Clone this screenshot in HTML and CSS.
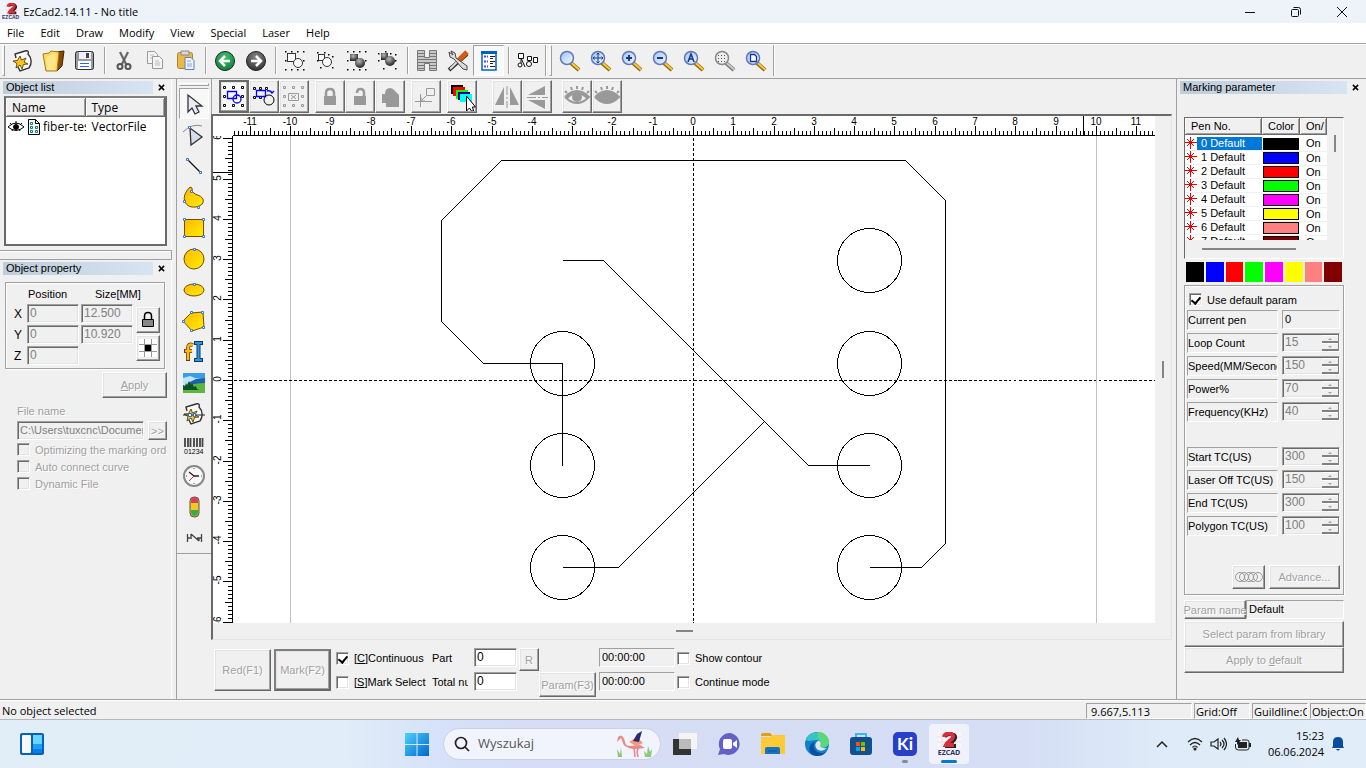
FILE: index.html
```html
<!DOCTYPE html>
<html lang="en">

<head>
    <meta charset="utf-8">
    <meta name="viewport" content="width=device-width, initial-scale=1">
    <title>EzCad2.14.11 - No title</title>
    <link rel="stylesheet" href="styles.css">
</head>

<body>
    <!-- shared icon parts -->
    <svg class="defs" width="0" height="0">
        <defs>
            <linearGradient id="gold" x1="0" y1="0" x2="1" y2="1"><stop offset="0" stop-color="#ffb800"/><stop offset="1" stop-color="#ffee00"/></linearGradient>
            <radialGradient id="ball" cx=".4" cy=".3" r=".7"><stop offset="0" stop-color="#bbb"/><stop offset="1" stop-color="#222"/></radialGradient>
            <radialGradient id="green" cx=".5" cy=".3" r=".7"><stop offset="0" stop-color="#3fc06e"/><stop offset="1" stop-color="#128040"/></radialGradient>
            <radialGradient id="dark" cx=".5" cy=".3" r=".7"><stop offset="0" stop-color="#888"/><stop offset="1" stop-color="#333"/></radialGradient>
            <linearGradient id="glass" x1="0" y1="0" x2="1" y2="1"><stop offset="0" stop-color="#9cc8f4"/><stop offset="1" stop-color="#f2f8ff"/></linearGradient>
            <linearGradient id="win" x1="0" y1="0" x2="1" y2="1"><stop offset="0" stop-color="#4fd0ff"/><stop offset="1" stop-color="#0067c8"/></linearGradient>
            <symbol id="dots" viewBox="0 0 24 24">
                <path d="M2 2h1.500v1.500H2zM8 2h1.500v1.500H8zM14 2h1.500v1.500h-1.500zM20 2h1.500v1.500h-1.500zM2 11h1.500v1.500H2zM20 11h1.500v1.500h-1.500zM2 20h1.500v1.500H2zM8 20h1.500v1.500H8zM14 20h1.500v1.500h-1.500zM20 20h1.500v1.500h-1.500z"/>
            </symbol>
            <symbol id="boxdots" viewBox="0 0 24 24">
                <path fill="none" stroke="currentColor" d="M1.500 1.500h2v2h-2zM10.500 1.500h2v2h-2zM19.500 1.500h2v2h-2zM1.500 10.500h2v2h-2zM19.500 10.500h2v2h-2zM1.500 19.500h2v2h-2zM10.500 19.500h2v2h-2zM19.500 19.500h2v2h-2z"/>
            </symbol>
            <symbol id="lens" viewBox="0 0 24 24">
                <path d="M13 14l8 7" stroke="#8a6a10" stroke-width="4"/>
                <path d="M13 13.500l8 7" stroke="#ffc83c" stroke-width="2"/>
                <circle cx="9" cy="9" r="6.500" fill="url(#glass)" stroke="#6576ba" stroke-width="1.500"/>
            </symbol>
            <symbol id="lensgray" viewBox="0 0 24 24">
                <path d="M13 14l8 7" stroke="#777" stroke-width="4"/>
                <path d="M13 13.500l8 7" stroke="#ccc" stroke-width="2"/>
                <circle cx="9" cy="9" r="6.500" fill="#eee" stroke="#888" stroke-width="1.500"/>
                <path d="M5 6.500h8M5 9.500h9M5 12.500h8" stroke="#555" stroke-dasharray="1 2"/>
            </symbol>
            <symbol id="star" viewBox="0 0 12 12">
                <path d="M5.500 0v12M0 5.500h12M2 2l7 7M9 2L2 9" stroke="#e80000" fill="none"/>
                <circle cx="5.500" cy="5.500" r="1.500" fill="#e80000"/>
            </symbol>
            <symbol id="close" viewBox="0 0 8 8">
                <path d="M1 1l6 6M7 1l-6 6" stroke="#000" stroke-width="1.700"/>
            </symbol>
            <symbol id="vector" viewBox="0 0 24 24">
                <path d="M5 9L4 5l10-3c3-1 4 1 3 3 4 4 4 10 1 14l-9 3-2-4" fill="#fafafa" stroke="#333" stroke-width="1.400"/>
                <path d="M9 7l1.500 4L15 9l-2 4 4 2-4.500.500L11 20l-2-4-4 3 1-4.500L2 12l4.500-.500z" fill="#ffc420" stroke="#443000" stroke-width=".8"/>
            </symbol>
            <symbol id="logo" viewBox="0 0 24 24">
                <path d="M0 0h24v24H0z" fill="#f8f6fa"/>
                <path d="M0 5h24M0 10h24M5 0v16M12 0v16M19 0v16" stroke="#e7dfe8"/>
                <path d="M8 5c1-4 11-4 10 1-.500 3-5 4-7 8h8" fill="none" stroke="#282028" stroke-width="4"/>
                <path d="M7 5c1-5 10-4 9 0-.500 3-5 4-7 8h8" fill="none" stroke="#d8303a" stroke-width="4"/>
            </symbol>
        </defs>
    </svg>

    <header class="titlebar">
        <span class="app-logo"><svg width="16" height="12" viewBox="3 0 17 17"><use href="#logo" width="24" height="24"/></svg><small>EZCAD</small></span>
        <h1>EzCad2.14.11 - No title</h1>
        <div class="win-buttons">
            <button aria-label="Minimize"><svg width="10" height="10"><path d="M0 5.500h10" stroke="#111"/></svg></button>
            <button aria-label="Restore"><svg width="10" height="10" fill="none" stroke="#111"><rect x=".500" y="2.500" width="7" height="7" rx="1"/><path d="M2.500.500h5q2 0 2 2v5"/></svg></button>
            <button aria-label="Close"><svg width="10" height="10"><path d="M0 0l10 10M10 0L0 10" stroke="#111"/></svg></button>
        </div>
    </header>

    <nav class="menubar">
        <a href="#">File</a><a href="#">Edit</a><a href="#">Draw</a><a href="#">Modify</a><a href="#">View</a><a href="#">Special</a><a href="#">Laser</a><a href="#">Help</a>
    </nav>

    <div class="toolbar">
        <i class="grip"></i>
        <button aria-label="New"><svg width="24" height="24"><use href="#vector"/></svg></button>
        <button aria-label="Open"><svg width="24" height="24"><path d="M14 3l8-1-2 15-5 5z" fill="#8a4a00" stroke="#3a2000"/><path d="M1 5l6-1 2-2 8 1-2 19H4z" fill="#ffd860" stroke="#a87818"/><path d="M4 8l10-4-1 17H5z" fill="#ffe68a"/></svg></button>
        <button aria-label="Save"><svg width="24" height="24"><rect x="2.500" y="2.500" width="18" height="18" rx="2" fill="#9a9a9a" stroke="#333"/><path d="M6 3h12v7H6z" fill="#eef"/><path d="M13 4h3v5h-3z" fill="#444"/><path d="M5 12h13v8H5z" fill="#fff"/><path d="M7 14.500h9M7 17.500h9" stroke="#2468e0"/></svg></button>
        <i class="sep"></i>
        <button aria-label="Cut"><svg width="24" height="24" fill="none" stroke="#555"><path d="M8 3l6 12M16 3l-6 12" stroke-width="2.500" stroke="#888"/><path d="M8 3l6 12M16 3l-6 12"/><circle cx="8" cy="17.500" r="2.500" stroke-width="2"/><circle cx="16" cy="17.500" r="2.500" stroke-width="2"/></svg></button>
        <button aria-label="Copy"><svg width="24" height="24" fill="#f4f4f4" stroke="#999"><path d="M4.500 2.500h7l3 3v9h-10z"/><path d="M9.500 7.500h7l3 3v9h-10z"/><path d="M7 6h4M7 9h2M12 12h4M12 14h5M12 16h5" stroke="#bbb"/></svg></button>
        <button aria-label="Paste"><svg width="24" height="24"><rect x="3.500" y="3.500" width="15" height="16" rx="2" fill="#ecb844" stroke="#ae8234"/><path d="M7 2h8v4H7z" fill="#d8d8d8" stroke="#888"/><path d="M11 8.500h6l3 3v9h-9z" fill="#eaf3ff" stroke="#6080c0"/><path d="M13 12h4M13 15h5M13 17h5" stroke="#88a8d8"/></svg></button>
        <i class="sep"></i>
        <button aria-label="Undo"><svg width="24" height="24"><circle cx="12" cy="12" r="9.500" fill="url(#green)" stroke="#222"/><path d="M17 12H7M12 7l-5 5 5 5" fill="none" stroke="#fff" stroke-width="2.500"/></svg></button>
        <button aria-label="Redo"><svg width="24" height="24"><circle cx="12" cy="12" r="9.500" fill="url(#dark)" stroke="#222"/><path d="M7 12h10M12 7l5 5-5 5" fill="none" stroke="#fff" stroke-width="2.500"/></svg></button>
        <i class="sep"></i>
        <button aria-label="Combine"><svg width="24" height="24"><use href="#dots"/><g fill="#fafafa" stroke="#333"><rect x="4.500" y="4.500" width="8" height="8"/><circle cx="15" cy="14" r="4.500"/></g></svg></button>
        <button aria-label="Uncombine"><svg width="24" height="24"><path d="M3 3h1.500v1.500H3zM10 3h1.500v1.500h-1.500zM3 11h1.500v1.500H3zM18 7h1.500v1.500h-1.500zM6 18h1.500v1.500H6zM18 18h1.500v1.500h-1.500zM14 5h1.500v1.500h-1.500z"/><g fill="#fafafa" stroke="#333"><rect x="4.500" y="5.500" width="6" height="6"/><circle cx="13" cy="13" r="4.500"/></g></svg></button>
        <button aria-label="Group"><svg width="24" height="24"><use href="#dots"/><g fill="url(#ball)"><rect x="5" y="5" width="8" height="7"/><circle cx="15" cy="14" r="5"/></g></svg></button>
        <button aria-label="Ungroup"><svg width="24" height="24"><path d="M2 4h1.500v1.500H2zM9 2h1.500v1.500H9zM2 11h1.500v1.500H2zM19 5h1.500v1.500h-1.500zM19 11h1.500v1.500h-1.500zM7 19h1.500v1.500H7zM19 19h1.500v1.500h-1.500zM14 4h1.500v1.500h-1.500z"/><g fill="url(#ball)"><rect x="5" y="4" width="7" height="7"/><circle cx="14" cy="12" r="5"/></g></svg></button>
        <i class="sep"></i>
        <button aria-label="Hatch"><svg width="24" height="24"><path d="M2.500 1.500h7v7h5v-7h7v20h-7v-7h-5v7h-7z" fill="#c8c8c8" stroke="#777"/><path d="M3 4.500h6M3 7.500h6M3 10.500h18M3 13.500h18M3 16.500h6M3 19.500h6M15 4.500h6M15 7.500h6M15 16.500h6M15 19.500h6" stroke="#777"/></svg></button>
        <button aria-label="System parameters"><svg width="24" height="24"><path d="M3 21L21 5" stroke="#333" stroke-width="4"/><path d="M12 12L21 3" stroke="#d85a10" stroke-width="5"/><path d="M4 20l8-8" stroke="#ddd" stroke-width="2"/><path d="M3 3l1 5 4 2 9 10 4 1v-4L10 9 9 4 5 2l2 4z" fill="#ddd" stroke="#444"/></svg></button>
        <button class="down" aria-label="Object list"><svg width="24" height="24"><path d="M5 3h14v18H5z" fill="#fff" stroke="#0060c8" stroke-width="1.500"/><path d="M4 2h16v3H4z" fill="#0060c8"/><path d="M13 7.500h5M13 9.500h3M13 12.500h5M13 14.500h3M13 17.500h5" stroke="#222"/><path d="M7 7.500h4M7 12.500h4M7 17.500h4" stroke="#44f" stroke-width="2" stroke-dasharray="2 1"/></svg></button>
        <i class="sep"></i>
        <button aria-label="Node list"><svg width="24" height="24" fill="#fff" stroke="#111"><path d="M5 9v8M5 9l4 9"/><path d="M2.500 4.500h5v5h-5zM11.500 7.500h4v4h-4zM17.500 8.500h4v5h-4z"/><circle cx="4" cy="16" r="2"/><circle cx="13" cy="15" r="2.500"/></svg></button>
        <i class="edge"></i>
        <i class="grip"></i>
        <button aria-label="Zoom window"><svg width="24" height="24"><use href="#lens"/></svg></button>
        <button aria-label="Zoom pan"><svg width="24" height="24"><use href="#lens"/><path d="M9 4v10M4 9h10M7.500 5.500L9 4l1.500 1.500M7.500 12.500L9 14l1.500-1.500M5.500 7.500L4 9l1.500 1.500M12.500 7.500L14 9l-1.500 1.500" fill="none" stroke="#183890"/></svg></button>
        <button aria-label="Zoom in"><svg width="24" height="24"><use href="#lens"/><path d="M9 6v6M6 9h6" stroke="#183890" stroke-width="2"/></svg></button>
        <button aria-label="Zoom out"><svg width="24" height="24"><use href="#lens"/><path d="M6 9h6" stroke="#183890" stroke-width="2"/></svg></button>
        <button aria-label="Zoom all"><svg width="24" height="24"><use href="#lens"/><path d="M6 13l3-8 3 8M7 10h4" fill="none" stroke="#183890" stroke-width="1.600"/></svg></button>
        <button aria-label="Zoom selection"><svg width="24" height="24"><use href="#lensgray"/></svg></button>
        <button aria-label="Zoom page"><svg width="24" height="24"><use href="#lens"/><path d="M6.500 5.500h4l2 2v5h-6z" fill="#fff" stroke="#183890" stroke-width="1.300"/></svg></button>
        <i class="edge"></i>
    </div>

    <main class="main">
        <aside class="left">
            <section class="panel list-panel">
                <div class="caption"><h2>Object list</h2><button aria-label="Close object list"><svg width="7" height="7"><use href="#close"/></svg></button></div>
                <div class="listbox">
                    <table class="objects">
                        <thead><tr><th>Name</th><th>Type</th></tr></thead>
                        <tbody><tr>
                            <td><svg width="16" height="12" viewBox="0 0 16 12" fill="none" stroke="#000"><path d="M0 6q8-8 16 0-8 7-16 0M2 2l2 2M8 0v3M14 2l-2 2M4 10l1-2M12 10l-1-2"/><circle cx="8" cy="6" r="2.500" fill="#000"/></svg><svg width="13" height="16" viewBox="0 0 13 16"><path d="M1.500.500h7l4 4v11h-11z" fill="#fff" stroke="#000"/><path d="M8.500.500v4h4" fill="none" stroke="#000"/><path d="M3.500 3.500h2v2h-2zM3.500 7.500h2v2h-2zM8.500 7.500h2v2h-2zM3.500 11.500h2v2h-2zM8.500 11.500h2v2h-2z" fill="none" stroke="#008080"/></svg><span>fiber-test</span></td>
                            <td>VectorFile</td>
                        </tr></tbody>
                    </table>
                </div>
            </section>
            <div class="splitter"></div>
            <section class="panel">
                <div class="caption"><h2>Object property</h2><button aria-label="Close object property"><svg width="7" height="7"><use href="#close"/></svg></button></div>
                <div class="position group">
                    <span></span><b>Position</b><b>Size[MM]</b>
                    <label for="px">X</label><input id="px" value="0" disabled><input aria-label="Width" value="12.500" disabled>
                    <label for="py">Y</label><input id="py" value="0" disabled><input aria-label="Height" value="10.920" disabled>
                    <label for="pz">Z</label><input id="pz" value="0" disabled>
                    <div class="side-buttons">
                        <button class="btn" aria-label="Lock ratio"><svg width="16" height="18" viewBox="0 0 16 18"><path d="M4.500 8V5q0-3.500 3.500-3.500t3.500 3.500v3" fill="none" stroke="#000" stroke-width="1.500"/><path d="M2.500 8.500h11v7h-11z" fill="#888" stroke="#000"/></svg></button>
                        <button class="btn" aria-label="Reference point"><svg width="18" height="18"><path d="M0 0h18v18H0z" fill="#999"/><path d="M0 0h5v5H0zM6 0h6v5H6zM13 0h5v5h-5zM0 6h5v6H0zM13 6h5v6h-5zM0 13h5v5H0zM6 13h6v5H6zM13 13h5v5h-5z" fill="#fff"/><path d="M6 6h6v6H6z"/></svg></button>
                    </div>
                </div>
                <button class="btn apply" disabled><u>A</u>pply</button>
                <div class="file">
                    <label for="fname">File name</label>
                    <div class="file-row"><input id="fname" value="C:\Users\tuxcnc\Documents" disabled><button class="btn" disabled>&gt;&gt;</button></div>
                    <label class="check"><input type="checkbox" disabled>Optimizing the marking order</label>
                    <label class="check"><input type="checkbox" disabled>Auto connect curve</label>
                    <label class="check"><input type="checkbox" disabled>Dynamic File</label>
                </div>
            </section>
        </aside>

        <div class="drawbar">
            <i class="hgrip"></i>
            <button class="down" aria-label="Pick"><svg width="24" height="24"><path d="M6 3v17l4-4 3 6 4-2-3-6h6z" fill="#e8eaf4" stroke="#333" stroke-width="1.300"/></svg></button>
            <button aria-label="Node edit"><svg width="24" height="24"><path d="M1 9Q10 0 20 3" fill="none" stroke="#888"/><path d="M8 5l1 17 11-8z" fill="#d8dcec" stroke="#333" stroke-width="1.300"/><path d="M6.500 3.500h2v2h-2z" fill="#fff" stroke="#3a78d8"/></svg></button>
            <button aria-label="Line"><svg width="24" height="24"><path d="M6 6l12 12" stroke="#111" stroke-width="1.200"/><path d="M4.500 4.500h2v2h-2zM17.500 17.500h2v2h-2z" fill="#fff" stroke="#3a78d8"/></svg></button>
            <button aria-label="Curve"><svg width="24" height="24"><path d="M8 2q-8 8-5 15 3 6 11 5 9-2 7-8-1-3-8-5-4-2-3-6z" fill="url(#gold)" stroke="#754c00"/><path d="M8.500 5.500h2v2h-2zM1.500 15.500h2v2h-2zM15.500 21.500h2v2h-2z" fill="#fff" stroke="#3a78d8"/></svg></button>
            <button aria-label="Rectangle"><svg width="24" height="24"><path d="M2.500 3.500h19v17h-19z" fill="url(#gold)" stroke="#754c00"/><path d="M1.500 2.500h2v2h-2zM20.500 2.500h2v2h-2zM1.500 19.500h2v2h-2zM20.500 19.500h2v2h-2z" fill="#fff" stroke="#3a78d8"/></svg></button>
            <button aria-label="Circle"><svg width="24" height="24"><circle cx="12" cy="12" r="10" fill="url(#gold)" stroke="#754c00"/><path d="M11.500 1.500h2v2h-2z" fill="#fff" stroke="#3a78d8"/></svg></button>
            <button aria-label="Ellipse"><svg width="24" height="24"><ellipse cx="12" cy="12" rx="10" ry="6" fill="url(#gold)" stroke="#754c00"/><path d="M11.500 5.500h2v2h-2z" fill="#fff" stroke="#3a78d8"/></svg></button>
            <button aria-label="Polygon"><svg width="24" height="24"><path d="M1 12l8-8 12-1 1 15-12 4z" fill="url(#gold)" stroke="#754c00"/><path d="M.500 11.500h2v2h-2zM8.500 2.500h2v2h-2zM19.500 2.500h2v2h-2zM20.500 17.500h2v2h-2zM8.500 20.500h2v2h-2z" fill="#fff" stroke="#3a78d8"/></svg></button>
            <button aria-label="Text"><svg width="24" height="24"><path d="M11 5c-5-2-5 2-5 5v11M2 11h8" fill="none" stroke="#5c3c00" stroke-width="4"/><path d="M11 5c-5-2-5 2-5 5v10M3 11h7" fill="none" stroke="#ffb820" stroke-width="2.500"/><path d="M12 3h9M12 20h9M16.500 3v17" stroke="#103860" stroke-width="4"/><path d="M13 3h7M13 20h7M16.500 3v17" stroke="#2a98e8" stroke-width="2"/></svg></button>
            <button aria-label="Bitmap"><svg width="24" height="24"><path d="M1 2h22v20H1z" fill="#bfe4fa"/><path d="M1 2h22v6L13 7 8 5 1 7z" fill="#3a9de8"/><path d="M6 12l8-4 9-1v7H6z" fill="#1a62b0"/><path d="M1 16q12-4 22-4v10H1z" fill="#5cb83c"/><path d="M1 17v-3l2 1 1-3 1 2 2-4 2 4 1-2 2 4 2-1 1 3 2 1H1z" fill="#0c5224"/></svg></button>
            <button aria-label="Vector file"><svg width="24" height="24"><use href="#vector"/><path d="M1 13h22" stroke="#223"/><path d="M6.500 11.500h3v3h-3zM11.500 11.500h2v3h-2z" fill="#fff" stroke="#1d6cd0"/></svg></button>
            <button aria-label="Barcode"><svg width="24" height="24"><path d="M3 5v9M6 5v9M8.500 5v9M12 5v9M15 5v9M18 5v9M20.500 5v9" stroke="#444" stroke-width="1.800"/><text x="2" y="21" class="tiny">01234</text></svg></button>
            <button aria-label="Delay"><svg width="24" height="24"><circle cx="12" cy="12" r="10" fill="#f8f8f8" stroke="#888" stroke-width="2"/><path d="M12 12L7 8M12 12h5" stroke="#222" stroke-width="1.300"/><path d="M12 12l-5 5" stroke="#e03030"/><path d="M12 4v1M12 19v1M4 12h1M19 12h1" stroke="#555"/></svg></button>
            <button aria-label="Input output"><svg width="24" height="24"><rect x="8" y="2" width="9" height="20" rx="4" fill="#f2c820" stroke="#555"/><path d="M9 8V6q0-4 3.500-4T16 6v2z" fill="#d8405a"/><path d="M9 15v2q0 4 3.500 4t3.500-4v-2z" fill="#3da84c"/></svg></button>
            <button aria-label="Encoder"><svg width="24" height="24" fill="none" stroke="#444" stroke-width="1.300"><path d="M5.500 8v8M19.500 8v8M5 12h5M15 12h5M9 8l8 7M9 8v3M17 15v-3"/></svg></button>
        </div>

        <div class="center">
            <div class="optbar">
                <button class="btn on" aria-label="Select mode"><svg width="24" height="24"><use href="#boxdots"/><g fill="none" stroke="#00f" stroke-width="1.300"><path d="M5.500 6.500h9v7h-9z"/><circle cx="15" cy="14" r="4"/></g></svg></button>
                <button class="btn" aria-label="Rotate mode"><svg width="24" height="24"><path fill="none" stroke="#000" d="M1.500 2.500h2v2h-2zM7.500 2.500h2v2h-2zM13.500 2.500h2v2h-2zM1.500 11.500h2v2h-2zM7.500 11.500h2v2h-2z"/><path d="M4.500 5.500h9v6h-9zM15 6q4-1 5 2l2-2M20 8l-2-2" fill="none" stroke="#00f" stroke-width="1.300"/><circle cx="17" cy="15" r="5" fill="none" stroke="#000"/></svg></button>
                <button class="btn off" aria-label="Clear selection"><svg width="24" height="24"><use href="#boxdots"/><path d="M6.500 8.500h10v7h-10zM9 10l5 4M14 10l-5 4" fill="none" stroke="#999"/></svg></button>
                <i></i>
                <button class="btn off" aria-label="Lock"><svg width="24" height="24"><path d="M8 11V8q0-4 4-4t4 4v3" fill="none" stroke="#999" stroke-width="2.500"/><path d="M6 11h12v9H6z" fill="#999"/></svg></button>
                <button class="btn off" aria-label="Unlock"><svg width="24" height="24"><path d="M9 8q0-4 3.500-4T16 8v3" fill="none" stroke="#999" stroke-width="2.500"/><path d="M6 11h12v9H6z" fill="#999"/></svg></button>
                <button class="btn off" aria-label="Unlock all"><svg width="24" height="24"><path d="M4 9h3q0-6 5-6 3 0 5 3l4 4v12H8v-4H4z" fill="#999"/></svg></button>
                <i></i>
                <button class="btn off" aria-label="Put to origin"><svg width="24" height="24" fill="none" stroke="#999"><path d="M12.500 3.500h8v7h-8zM1 16.500h17M6.500 9v13M12 11l-5 5M7 12v4h4"/></svg></button>
                <i></i>
                <button class="btn" aria-label="Pen order"><svg width="28" height="28" viewBox="0 0 28 28"><path d="M3 2h12v9H3z"/><path d="M5 4h12v9H5z" fill="red"/><path d="M8 7h12v9H8z" fill="#0f0"/><path d="M10 9h12v8H10z" fill="#000080"/><path d="M12 11h12v8H12z" fill="#0ff"/><path d="M18.500 13v15l3-3 2 3h2l-1-4h3z" fill="#fff" stroke="#000"/></svg></button>
                <i class="wide"></i>
                <button class="btn off" aria-label="Mirror horizontal"><svg width="26" height="24" fill="#999"><path d="M10 2v18H1zM16 2v18h9z"/><path d="M13 1v22" stroke="#999" stroke-dasharray="9 2 2 2"/></svg></button>
                <button class="btn off" aria-label="Mirror vertical"><svg width="24" height="24" fill="#999"><path d="M20 1v9H3zM20 15v9L3 15z"/><path d="M2 12.500h21" stroke="#999" stroke-dasharray="9 2 2 2"/></svg></button>
                <i class="mid"></i>
                <button class="btn off" aria-label="Show"><svg width="26" height="24" fill="none" stroke="#999" stroke-width="2"><path d="M1 12Q13 0 25 12 13 24 1 12M3 8L1 6M8 5L7 2M13 4V1M18 5l1-3M23 8l2-2M2 14q11-12 22 0"/><circle cx="13" cy="12" r="4" fill="#999"/></svg></button>
                <button class="btn off" aria-label="Hide"><svg width="26" height="24" fill="#999" stroke="#999" stroke-width="2"><path d="M1 12Q13 0 25 12 13 24 1 12M3 8L1 6M8 5L7 2M13 4V1M18 5l1-3M23 8l2-2"/></svg></button>
            </div>

            <div class="workspace">
                <span class="corner"></span>
                <svg class="ruler" id="rulerX"></svg>
                <span class="vscroll"></span>
                <svg class="ruler" id="rulerY"></svg>
                <svg class="canvas" id="canvas">
                    <g transform="translate(-.5 .5)" fill="none" stroke="#000" shape-rendering="crispEdges">
                        <path d="M-403-900v1800M403-900v1800" stroke="#c0c0c0"/>
                        <path d="M0-243v900M-460 0H900" stroke-dasharray="3 2"/>
                        <path d="M-131 85V-17H-210L-252-59V-160L-192-220H212L252-180V163L228 187H176"/>
                        <path d="M-131-120H-90L115 85H176M-131 187H-75L71 41"/>
                        <circle cx="-131" cy="-17" r="32"/>
                        <circle cx="-131" cy="85" r="32"/>
                        <circle cx="-131" cy="187" r="32"/>
                        <circle cx="176" cy="-120" r="32"/>
                        <circle cx="176" cy="-17" r="32"/>
                        <circle cx="176" cy="85" r="32"/>
                        <circle cx="176" cy="187" r="32"/>
                    </g>
                </svg>
                <span class="vscroll"><i></i></span>
                <span class="hscroll"><i></i></span>
            </div>

            <form class="markbar">
                <button class="btn big" type="button" disabled>Red(F1)</button>
                <button class="btn big thick" type="button" disabled>Mark(F2)</button>
                <div class="col checks">
                    <label class="check"><input type="checkbox" checked><span>[<u>C</u>]Continuous</span></label>
                    <label class="check"><input type="checkbox"><span>[<u>S</u>]Mark Select</span></label>
                </div>
                <div class="col names"><label for="part">Part</label><label for="total">Total num</label></div>
                <div class="col counts"><input id="part" value="0"><input id="total" value="0"></div>
                <button class="btn reset" type="button" disabled>R</button>
                <button class="btn param" type="button" disabled>Param(F3)</button>
                <div class="col times"><input aria-label="Part time" value="00:00:00" readonly><input aria-label="Total time" value="00:00:00" readonly></div>
                <div class="col checks">
                    <label class="check"><input type="checkbox">Show contour</label>
                    <label class="check"><input type="checkbox">Continue mode</label>
                </div>
            </form>
        </div>

        <aside class="right">
            <div class="caption"><h2>Marking parameter</h2><button aria-label="Close marking parameter"><svg width="7" height="7"><use href="#close"/></svg></button></div>
            <div class="penbox">
                <div class="pen-scroll">
                    <table class="pens">
                        <thead><tr><th>Pen No.</th><th>Color</th><th>On/</th></tr></thead>
                        <tbody>
                            <tr class="selected"><td><svg width="12" height="12"><use href="#star"/></svg><span>0 Default</span></td><td><i class="c0"></i></td><td>On</td></tr>
                            <tr><td><svg width="12" height="12"><use href="#star"/></svg><span>1 Default</span></td><td><i class="c1"></i></td><td>On</td></tr>
                            <tr><td><svg width="12" height="12"><use href="#star"/></svg><span>2 Default</span></td><td><i class="c2"></i></td><td>On</td></tr>
                            <tr><td><svg width="12" height="12"><use href="#star"/></svg><span>3 Default</span></td><td><i class="c3"></i></td><td>On</td></tr>
                            <tr><td><svg width="12" height="12"><use href="#star"/></svg><span>4 Default</span></td><td><i class="c4"></i></td><td>On</td></tr>
                            <tr><td><svg width="12" height="12"><use href="#star"/></svg><span>5 Default</span></td><td><i class="c5"></i></td><td>On</td></tr>
                            <tr><td><svg width="12" height="12"><use href="#star"/></svg><span>6 Default</span></td><td><i class="c6"></i></td><td>On</td></tr>
                            <tr><td><svg width="12" height="12"><use href="#star"/></svg><span>7 Default</span></td><td><i class="c7"></i></td><td>On</td></tr>
                        </tbody>
                    </table>
                </div>
                <span class="pen-v"></span>
                <span class="pen-h"></span>
            </div>
            <div class="palette"><i class="c0"></i><i class="c1"></i><i class="c2"></i><i class="c3"></i><i class="c4"></i><i class="c5"></i><i class="c6"></i><i class="c7"></i></div>

            <div class="params group">
                <label class="check"><input type="checkbox" checked>Use default param</label>
                <div class="row"><label for="pen">Current pen</label><input id="pen" class="plain" value="0" readonly></div>
                <div class="row"><label for="loop">Loop Count</label><span class="spin"><input id="loop" value="15" disabled><i></i></span></div>
                <div class="row"><label for="speed">Speed(MM/Second)</label><span class="spin"><input id="speed" value="150" disabled><i></i></span></div>
                <div class="row"><label for="power">Power%</label><span class="spin"><input id="power" value="70" disabled><i></i></span></div>
                <div class="row"><label for="freq">Frequency(KHz)</label><span class="spin"><input id="freq" value="40" disabled><i></i></span></div>
                <div class="row gap"><label for="start">Start TC(US)</label><span class="spin"><input id="start" value="300" disabled><i></i></span></div>
                <div class="row"><label for="off">Laser Off TC(US)</label><span class="spin"><input id="off" value="150" disabled><i></i></span></div>
                <div class="row"><label for="end">End TC(US)</label><span class="spin"><input id="end" value="300" disabled><i></i></span></div>
                <div class="row"><label for="poly">Polygon TC(US)</label><span class="spin"><input id="poly" value="100" disabled><i></i></span></div>
                <div class="advance">
                    <button class="btn" aria-label="Wobble" disabled><svg width="28" height="12" fill="none" stroke="#999"><circle cx="5" cy="6" r="4.500"/><circle cx="9" cy="6" r="4.500"/><circle cx="14" cy="6" r="4.500"/><circle cx="18" cy="6" r="4.500"/><circle cx="23" cy="6" r="4.500"/></svg></button>
                    <button class="btn" disabled>Advance...</button>
                </div>
            </div>
            <div class="pname"><button class="btn" disabled>Param name</button><input aria-label="Param name" value="Default" readonly></div>
            <button class="btn wide" disabled>Select param from library</button>
            <button class="btn wide" disabled><span>Apply to <u>d</u>efault</span></button>
        </aside>
    </main>

    <footer class="status">
        <p>No object selected</p>
        <span class="coords">9.667,5.113</span><span>Grid:Off</span><span>Guildline:Off</span><span>Object:On</span>
    </footer>

    <div class="taskbar">
        <div class="task-left"><button aria-label="Widgets"><svg width="24" height="24"><rect width="24" height="22" y="1" rx="2" fill="#0860b8"/><rect x="2" y="3" width="9" height="18" rx="1" fill="#f6f6f6"/><path d="M13 3h9v9h-9z" fill="#68d4ff"/><path d="M13 12h9v5h-9z" fill="#18a0f8"/><path d="M13 17h9v4h-9z" fill="#0880e8"/></svg></button></div>
        <div class="task-center">
            <button aria-label="Start"><svg width="24" height="24" fill="url(#win)"><path d="M0 1h11.500v11H0zM12.500 1H24v11H12.500zM0 13h11.500v11H0zM12.500 13H24v11H12.500z"/></svg></button>
            <div class="search">
                <svg width="16" height="16" fill="none" stroke="#222" stroke-width="1.700"><circle cx="7" cy="7" r="5.500"/><path d="M11 11l4 4"/></svg>
                <input type="text" placeholder="Wyszukaj" aria-label="Wyszukaj">
                <svg width="40" height="28" viewBox="0 0 40 28"><path d="M4 27l-1-8 3 5 1-7 1 10zM31 27l-1-6 3 3 1-8 2 6 2-3-1 8z" fill="#8ec878"/><path d="M3 12l1-5q3-3 5 0c3 4 1 9 7 9l10-1 5 3-9 1q-6 0-9-2C8 15 9 11 7 8z" fill="#e88a88"/><path d="M15 12l8-5 6 6-7 3z" fill="#f49a78"/><path d="M19 11l4-7 5-3-3 11z" fill="#2c2a72"/><path d="M20 18l1 9M24 18l-1 4 1 5" fill="none" stroke="#f08090" stroke-width="1.500"/></svg>
            </div>
            <button aria-label="Task view"><svg width="24" height="24"><path d="M6 1h18v16H6z" fill="#f4f4f4"/><path d="M0 7h18v16H0z" fill="#333"/><path d="M6 7h12v10H6z" fill="#bbb"/></svg></button>
            <button aria-label="Chat"><svg width="24" height="24"><path d="M12 1a11 11 0 1 1-5 21l-6 1 2-6A11 11 0 0 1 12 1z" fill="#6460c8"/><rect x="6" y="7" width="9" height="10" rx="2" fill="#fff"/><path d="M16 11l4-3v8l-4-3z" fill="#fff"/></svg></button>
            <button aria-label="Files"><svg width="24" height="24"><path d="M0 3q0-2 2-2h7l3 3H0z" fill="#e0a010"/><path d="M0 5h9l2-2h13v19H0z" fill="#ffca38"/><path d="M4 22v-5q0-2 2-2h11q2 0 2 2v5z" fill="#1474c0"/><path d="M7 19h9" stroke="#0c559a"/></svg></button>
            <button aria-label="Edge"><svg width="24" height="24"><circle cx="12" cy="12" r="12" fill="#1080d0"/><path d="M1 8C4-2 21-3 24 10c0 6-8 7-9 4 2-3-1-6-4-6-4 0-7 2-10 0z" fill="#38c4c0"/><path d="M13 0c7 0 11 5 11 10 0 6-8 7-9 4 2-3 1-6-2-8z" fill="#5cd878"/><path d="M10 10c-4 6 2 12 9 11l3-2q-5 7-14 4C2 20 4 11 10 10z" fill="#0c4f9c"/><path d="M15 14c2-3 0-5-2-5-4 2-3 7 0 9q5 2 9-2-5 1-7-2z" fill="#dfe5f6"/></svg></button>
            <button aria-label="Store"><svg width="24" height="24"><path d="M7 7V2h10v5" fill="none" stroke="#38b8f0" stroke-width="2"/><rect y="5" x="1" width="22" height="18" rx="3" fill="#12508c"/><path d="M7 10h4v4H7z" fill="#f25022"/><path d="M12 10h4v4h-4z" fill="#7fba00"/><path d="M7 15h4v4H7z" fill="#00a4ef"/><path d="M12 15h4v4h-4z" fill="#ffb900"/></svg></button>
            <button class="kicad" aria-label="KiCad"><span>Ki</span></button>
            <button class="active" aria-label="EzCad"><span class="app-logo"><svg width="24" height="17" viewBox="0 0 24 17"><use href="#logo" width="24" height="24"/></svg><small>EZCAD</small></span></button>
        </div>
        <div class="tray">
            <svg width="12" height="8" fill="none" stroke="#222" stroke-width="1.500"><path d="M1 7l5-5 5 5"/></svg>
            <svg class="wifi" width="16" height="14" fill="none" stroke="#222" stroke-width="1.200"><path d="M1 5q7-7 14 0M3 8q5-5 10 0M5.500 10.500q2.500-3 5 0"/><circle cx="8" cy="12" r="1" fill="#222"/></svg>
            <svg width="17" height="14" fill="none" stroke="#222" stroke-width="1.200"><path d="M1 5h3l4-3v10L4 9H1zM10 5q2 2 0 4M12 3q4 4 0 8M14 1q5 6 0 12"/></svg>
            <svg width="17" height="14"><rect x="4" y="5" width="9" height="6" fill="#222"/><path d="M1.500 7v3q0 3 3 3h8q2.500 0 2.500-2V5q0-2-2-2H8" fill="none" stroke="#222"/><path d="M15 6h2v4h-2zM4 0L1 5h2v3l4-5H5z" fill="#222"/></svg>
            <p class="clock">15:23<br>06.06.2024</p>
            <svg width="14" height="16" fill="#0a4ca0"><path d="M1 12l1-2V6q0-5 5-5t5 5v4l1 2zM5 13h4q-2 3-4 0z"/></svg>
        </div>
    </div>
    <script src="script.js"></script>
</body>

</html>
```

FILE: styles.css
```css
* {
    box-sizing: border-box;
}

body {
    margin: 0;
    min-height: 100vh;
    display: flex;
    flex-direction: column;
    background: #f0f0f0;
    color: #000;
    font-family: "Liberation Sans", Arial, sans-serif;
    font-size: 11px;
    line-height: 14px;
}

.defs {
    position: absolute;
}

svg {
    display: block;
    flex: none;
}

h1, h2, p {
    margin: 0;
    font-weight: normal;
}

button, input {
    font: inherit;
    color: inherit;
    padding: 0;
    margin: 0;
    min-width: 0;
    border: 0;
    border-radius: 0;
    background: none;
}

button {
    display: flex;
    align-items: center;
    justify-content: center;
    white-space: nowrap;
}

/* title and menu */
.titlebar {
    display: flex;
    align-items: center;
    height: 23px;
    background: #eef3fa;
    padding: 0 1px 0 2px;
    gap: 4px;
}

.titlebar h1 {
    font: 11px/16px "Open Sans", sans-serif;
}

.app-logo {
    display: flex;
    flex-direction: column;
    align-items: center;
}

.app-logo small {
    font-size: 5px;
    line-height: 5px;
    font-weight: bold;
    color: #303060;
}

.win-buttons {
    display: flex;
    margin-left: auto;
}

.win-buttons button {
    width: 46px;
    height: 20px;
}

.menubar {
    display: flex;
    align-items: center;
    gap: 16px;
    height: 20px;
    padding-left: 7px;
    background: #fff;
    font: 11px/16px "Open Sans", sans-serif;
}

.menubar a {
    color: #000;
    text-decoration: none;
}

/* top toolbar */
.toolbar {
    display: flex;
    height: 36px;
    padding: 1px 0 2px 2px;
    border-top: 1px solid #a0a0a0;
    border-bottom: 1px solid #a0a0a0;
    box-shadow: inset 0 1px #fff;
}

.toolbar button {
    width: 31px;
    height: 31px;
}

.toolbar .down, .drawbar .down {
    background: #f8f8f8;
    border: 1px solid;
    border-color: #a0a0a0 #fff #fff #a0a0a0;
}

.grip {
    width: 3px;
    margin-right: 2px;
    border: 1px solid;
    border-color: #fff #a0a0a0 #a0a0a0 #fff;
}

.sep {
    width: 2px;
    margin: 2px 2px 2px 4px;
    border-left: 1px solid #a0a0a0;
    border-right: 1px solid #fff;
}

.edge {
    width: 2px;
    margin: 0 2px;
    border-left: 1px solid #a0a0a0;
    border-right: 1px solid #fff;
}

/* panels */
.main {
    flex: 1;
    display: flex;
    min-height: 621px;
    border-bottom: 1px solid #a0a0a0;
}

.left {
    width: 177px;
    border-right: 1px solid #a0a0a0;
    box-shadow: inset -4px 0 #f0f0f0, inset -5px 0 #fff;
}

.panel {
    padding: 1px 9px 0 3px;
}

.caption {
    display: flex;
    height: 14px;
    align-items: center;
}

.caption h2 {
    flex: 0 0 150px;
    padding-left: 3px;
    font-size: 11px;
    line-height: 13px;
    background: linear-gradient(90deg, #bfcddb, #d7e4f2);
}

.caption button {
    margin-left: 3px;
    width: 10px;
}

.list-panel {
    height: 169px;
}

.listbox {
    height: 150px;
    margin: 2px 0 0 1px;
    background: #fff;
    border: 2px solid #696969;
    border-top-color: #808080;
    overflow: hidden;
}

table {
    border-collapse: collapse;
    table-layout: fixed;
    width: 100%;
}

th, td {
    padding: 0;
    text-align: left;
    font-weight: normal;
    overflow: hidden;
    white-space: nowrap;
}

th {
    background: #f0f0f0;
    box-shadow: inset -1px -1px #696969, inset 1px 1px #fff, inset -2px -2px #a0a0a0;
}

.objects {
    font: 12px/16px "Open Sans", sans-serif;
}

.objects th {
    height: 19px;
    padding-left: 6px;
}

.objects td {
    height: 19px;
    padding-left: 6px;
}

.objects td:first-child {
    display: flex;
    gap: 3px;
    align-items: center;
    padding-left: 2px;
}

.splitter {
    height: 10px;
    margin: 2px 4px 0 0;
    border: 1px solid #a0a0a0;
    border-left: 0;
    box-shadow: inset 0 1px #fff;
}

.group {
    border: 1px solid #a0a0a0;
    box-shadow: inset 1px 1px #fff, 1px 1px #fff;
}

input:not([type="checkbox"]) {
    height: 19px;
    padding: 0 0 2px 2px;
    border: 1px solid;
    border-color: #a0a0a0 #fff #fff #a0a0a0;
    box-shadow: inset 1px 1px #696969, inset -1px -1px #e3e3e3;
    font-size: 12px;
    background: #fff;
}

input:not([type="checkbox"]):disabled {
    color: #808080;
    background: #f0f0f0;
}

.position {
    display: grid;
    grid-template-columns: 13px 52px 52px;
    grid-template-rows: 18px 19px 19px 19px;
    gap: 2px;
    height: 87px;
    margin: 7px 2px 0;
    padding: 1px 6px;
    position: relative;
}

.position b {
    font-weight: normal;
    padding-left: 1px;
    line-height: 20px;
}

.position b + b {
    padding-left: 14px;
    white-space: nowrap;
}

.position label {
    padding: 3px 0 0 2px;
    font-size: 12px;
}

.side-buttons {
    position: absolute;
    right: 4px;
    top: 24px;
    display: grid;
    gap: 2px;
}

.side-buttons .btn {
    width: 24px;
    height: 26px;
}

.btn {
    background: #f0f0f0;
    border: 1px solid;
    border-color: #fff #696969 #696969 #fff;
    box-shadow: inset -1px -1px #a0a0a0, inset 1px 1px #e3e3e3;
}

.btn:disabled, .file {
    color: #a0a0a0;
    text-shadow: 1px 1px #fff;
}

.apply {
    width: 65px;
    height: 26px;
    margin: 3px 0 0 auto;
}

.file {
    display: grid;
    padding: 6px 0 0 14px;
}

.file > label {
    white-space: nowrap;
    overflow: hidden;
    height: 17px;
}

.file-row {
    display: grid;
    grid-template-columns: 1fr 19px;
    gap: 4px;
    margin-bottom: 1px;
}

.file-row input:not([type="checkbox"]) {
    font-size: 11px;
}

.check {
    display: flex;
    align-items: center;
    white-space: nowrap;
}

.check input {
    appearance: none;
    flex: none;
    width: 13px;
    height: 13px;
    margin-right: 5px;
    background: #fff;
    border: 1px solid;
    border-color: #a0a0a0 #fff #fff #a0a0a0;
    box-shadow: inset 1px 1px #696969, inset -1px -1px #e3e3e3;
}

.check input:disabled {
    background: #f0f0f0;
}

.check input:checked:after {
    content: "";
    display: block;
    width: 4px;
    height: 7px;
    margin: 1px 0 0 3px;
    border: solid #000;
    border-width: 0 2px 2px 0;
    transform: rotate(40deg);
}

/* drawing tools */
.drawbar {
    width: 34px;
    height: 475px;
    padding: 4px 2px 0;
    border-bottom: 1px solid #a0a0a0;
}

.drawbar button {
    width: 30px;
    height: 31px;
}

.hgrip {
    display: block;
    height: 3px;
    margin-bottom: 2px;
    border: 1px solid;
    border-color: #fff #a0a0a0 #a0a0a0 #fff;
}

.tiny {
    font-size: 7px;
}

/* drawing area */
.center {
    flex: 1;
    min-width: 0;
    display: flex;
    flex-direction: column;
    margin-right: 4px;
}

.optbar {
    display: flex;
    height: 35px;
    padding: 1px 0 1px 7px;
    border-left: 1px solid #a0a0a0;
}

.optbar .btn {
    width: 30px;
}

.optbar i {
    width: 6px;
}

.optbar .wide {
    width: 15px;
}

.optbar .mid {
    width: 10px;
}

.optbar .on {
    background: #f8f8f8;
    border: 2px solid #696969;
}

.optbar .off {
    color: #999;
}

.workspace {
    flex: 1;
    min-height: 0;
    display: grid;
    grid-template-columns: 20px 1fr 16px;
    grid-template-rows: 20px 1fr 16px;
    border: 1px solid #e3e3e3;
    border-top: 2px solid #696969;
    border-left: 2px solid #696969;
}

.workspace svg {
    width: 100%;
    height: 100%;
    min-height: 0;
    background: #fff;
}

.corner {
    background: #fff;
}

.ruler text {
    font-size: 10px;
    text-anchor: middle;
}

.vscroll, .hscroll {
    display: grid;
    place-items: center;
}

.vscroll i {
    width: 2px;
    height: 17px;
    margin-bottom: 20px;
    background: #858585;
}

.hscroll {
    grid-column: 1 / 3;
}

.hscroll i {
    width: 17px;
    height: 2px;
    background: #858585;
}

.markbar {
    display: flex;
    height: 59px;
    padding: 8px 0 2px 3px;
}

.big {
    width: 57px;
    height: 42px;
    margin: 1px 3px 0 0;
}

.big.thick {
    border: 2px solid #696969;
    border-color: #808080 #696969 #696969 #808080;
}

.col {
    display: grid;
    grid-template-rows: 20px 20px;
    row-gap: 4px;
}

.checks {
    width: 96px;
    margin-left: 2px;
    align-content: start;
}

.names {
    width: 36px;
    line-height: 20px;
    overflow: hidden;
    white-space: nowrap;
    align-content: start;
}

.counts {
    width: 43px;
    margin-left: 6px;
    align-content: start;
}

.reset {
    width: 20px;
    height: 23px;
    margin-left: 2px;
}

.param {
    align-self: flex-end;
    width: 57px;
    height: 25px;
    margin-right: 3px;
}

.times {
    width: 76px;
    align-content: start;
}

.col.times input, .row .plain, .pname input {
    background: #f0f0f0;
    box-shadow: none;
    font-size: 11px;
}

/* marking parameters */
.right {
    width: 190px;
    padding: 1px 22px 0 7px;
    border-left: 1px solid #a0a0a0;
}

.right .caption {
    margin-left: -4px;
    margin-right: -17px;
}

.right .caption h2 {
    flex-basis: 167px;
}

.penbox {
    display: grid;
    grid-template-columns: 142px 1fr;
    grid-template-rows: 122px 1fr;
    height: 142px;
    margin-top: 23px;
    border: 1px solid;
    border-color: #696969 #fff #fff #696969;
}

.pen-scroll {
    overflow: hidden;
    background: #fff;
}

.pens {
    line-height: 13px;
}

.pens th {
    height: 18px;
    padding-left: 6px;
    border-bottom: 2px solid #fff;
    font-size: 11px;
}

.pens th:first-child {
    width: 77px;
}

.pens th:nth-child(2) {
    width: 38px;
}

.pens td {
    height: 14px;
    border-bottom: 1px solid #f0f0f0;
    font-size: 11px;
}

.pens td:first-child {
    display: flex;
}

.pens td:last-child {
    padding-left: 6px;
}

.pens td span {
    flex: 1;
    padding-left: 4px;
}

.pens .selected span {
    background: #0078d7;
    color: #fff;
}

.pens td i {
    display: block;
    height: 12px;
    margin: 0 1px;
    border: 1px solid #000;
}

.pen-v {
    width: 2px;
    height: 17px;
    margin: 17px 0 0 7px;
    background: #858585;
}

.pen-h {
    width: 94px;
    height: 2px;
    margin: 8px 0 0 17px;
    background: #858585;
}

.palette {
    display: flex;
    gap: 2px;
    height: 20px;
    margin: 3px 2px;
}

.palette i {
    flex: 1;
}

.c0 { background: #000; }
.c1 { background: #00f; }
.c2 { background: #f00; }
.c3 { background: #0f0; }
.c4 { background: #f0f; }
.c5 { background: #ff0; }
.c6 { background: #ff8080; }
.c7 { background: #800000; }

.params {
    height: 310px;
    padding: 5px 3px 5px 2px;
    display: flex;
    flex-direction: column;
}

.params .check {
    height: 17px;
    padding-left: 2px;
    margin-bottom: 2px;
}

.row {
    display: grid;
    grid-template-columns: 91px 1fr;
    gap: 4px;
    height: 20px;
    margin-bottom: 3px;
}

.row.gap {
    margin-top: 22px;
}

.row label {
    line-height: 18px;
    border: 1px solid;
    border-color: #a0a0a0 #fff #fff #a0a0a0;
    overflow: hidden;
    white-space: nowrap;
}

.spin {
    position: relative;
    display: grid;
}

.spin i {
    position: absolute;
    right: 2px;
    top: 2px;
    width: 16px;
    height: 16px;
    background: linear-gradient(#fff 1px, #f0f0f0 1px 6px, #808080 6px 8px, #fff 8px 9px, #f0f0f0 9px 14px, #808080 14px);
    box-shadow: 1px 0 #808080;
}

.spin i:before, .spin i:after {
    content: "";
    position: absolute;
    left: 6px;
    top: 3px;
    border: 2px solid transparent;
    border-top: 0;
    border-bottom-color: #a0a0a0;
}

.spin i:after {
    top: 11px;
    transform: rotate(180deg);
}

.advance {
    display: grid;
    grid-template-columns: 33px 71px;
    gap: 4px;
    justify-content: end;
    height: 24px;
    margin-top: auto;
}

.pname {
    display: grid;
    grid-template-columns: 62px 1fr;
    margin: 5px 0 2px;
}

.btn.wide {
    width: 100%;
    height: 26px;
}

/* status line */
.status {
    display: flex;
    height: 20px;
    padding-top: 2px;
    border-top: 1px solid #fff;
    border-bottom: 1px solid #b0b8c0;
    font: 11px/16px "Open Sans", sans-serif;
}

.status p {
    flex: 1;
    padding-left: 2px;
}

.status span {
    width: 56px;
    margin-left: 2px;
    padding-left: 1px;
    overflow: hidden;
    white-space: nowrap;
    border: 1px solid;
    border-color: #a0a0a0 #fff #fff #a0a0a0;
    line-height: 15px;
}

.status .coords {
    width: 106px;
    padding-left: 4px;
}

/* windows taskbar */
.taskbar {
    display: grid;
    grid-template-columns: 1fr auto 1fr;
    align-items: center;
    height: 48px;
    background: linear-gradient(90deg, #e2eef7, #e1edf8 25%, #d5e2f9 32%, #d6ddf5 38%, #d5def5 75%, #deebf8 85%, #e1edf8);
    font: 12px/16px "Open Sans", sans-serif;
}

.task-left button {
    margin-left: 20px;
}

.task-center {
    display: flex;
}

.task-center button {
    width: 40px;
    height: 40px;
    margin: 0 2px;
}

.search {
    display: flex;
    align-items: center;
    width: 218px;
    height: 32px;
    margin: 4px 2px 4px 4px;
    padding: 0 6px 0 10px;
    border: 1px solid #cbd2e4;
    border-radius: 16px;
    background: #f1f4fd;
}

.search input:not([type="checkbox"]) {
    flex: 1;
    padding-left: 8px;
    border: 0;
    box-shadow: none;
    background: none;
    font-size: 13px;
}

.search input::placeholder {
    color: #555;
}

.kicad span {
    width: 24px;
    height: 24px;
    border-radius: 5px;
    background: #2840c8;
    color: #fff;
    font: bold 17px/24px Lato, sans-serif;
}

.task-center .kicad, .task-center .active {
    position: relative;
}

.kicad:after, .active:after {
    content: "";
    position: absolute;
    bottom: 1px;
    width: 6px;
    height: 3px;
    border-radius: 2px;
    background: #858a98;
}

.task-center .active {
    background: #eff2fb;
    border-radius: 4px;
}

.active:after {
    width: 16px;
    background: #0078d4;
}

.active small {
    font-size: 7px;
    line-height: 7px;
}

.tray {
    display: flex;
    align-items: center;
    justify-content: flex-end;
    gap: 7px;
    padding-right: 21px;
}

.tray .wifi {
    margin-left: 12px;
}

.clock {
    margin-left: 10px;
    text-align: right;
    font-size: 11px;
}
```

FILE: script.js
```javascript
var UNIT = 40.3;

function line(x1, y1, x2, y2) {
    return "M" + x1 + " " + y1 + "L" + x2 + " " + y2;
}

function drawRulers() {
    var canvas = document.getElementById("canvas");
    var rx = document.getElementById("rulerX");
    var ry = document.getElementById("rulerY");
    var w = canvas.clientWidth;
    var h = canvas.clientHeight;
    var ox = Math.floor(w / 2);
    var oy = Math.ceil(h / 2);
    canvas.setAttribute("viewBox", -ox + " " + -oy + " " + w + " " + h);
    rx.setAttribute("viewBox", -ox + " 0 " + w + " 20");
    ry.setAttribute("viewBox", "0 " + -oy + " 20 " + h);

    // cursor markers first, then the ticks
    var dx = line(-ox, 19.5, ox, 19.5) + line(389.5, 0, 389.5, 20);
    var dy = line(19.5, -oy, 19.5, oy) + line(0, -207.5, 20, -207.5);
    var tx = "";
    var ty = "";
    for (var i = -300; i <= 300; i++) {
        var p = Math.round(i * UNIT / 10);
        var len = i % 10 == 0 ? 10 : i % 5 == 0 ? 8 : 5;
        if (Math.abs(p) < ox) {
            dx += line(p - 0.5, 20 - len, p - 0.5, 20);
            if (i % 10 == 0) tx += '<text x="' + (p - 1) + '" y="9">' + i / 10 + "</text>";
        }
        if (Math.abs(p) < oy) {
            dy += line(20 - len, p + 0.5, 20, p + 0.5);
            if (i % 10 == 0) ty += '<text transform="translate(8 ' + (p - 1) + ') rotate(-90)">' + -i / 10 + "</text>";
        }
    }
    rx.innerHTML = '<path stroke="#000" shape-rendering="crispEdges" d="' + dx + '"/>' + tx;
    ry.innerHTML = '<path stroke="#000" shape-rendering="crispEdges" d="' + dy + '"/>' + ty;
}

drawRulers();
window.addEventListener("resize", drawRulers);
```
